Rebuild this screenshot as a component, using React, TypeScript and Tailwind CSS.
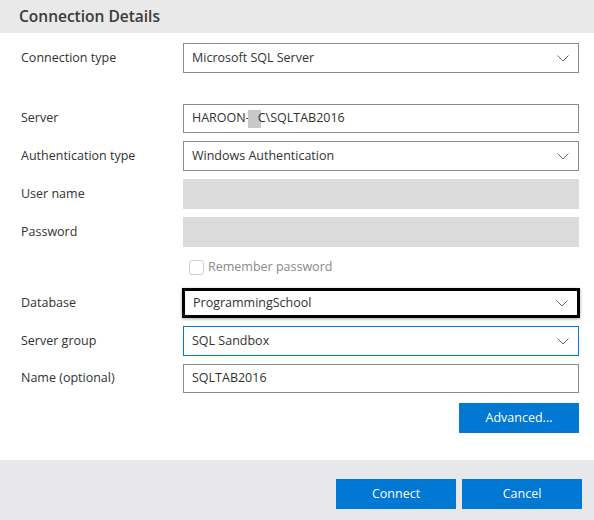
import { ReactNode } from 'react';

const font = { fontFamily: '"Open Sans", "Noto Sans", sans-serif' };

function Chevron() {
  return (
    <svg width="12" height="7" viewBox="0 0 12 7" className="shrink-0" aria-hidden>
      <path d="M0.5 0.5 L6 6 L11.5 0.5" fill="none" stroke="#6b6b6b" strokeWidth="1" />
    </svg>
  );
}

function Row({ label, children }: { label?: string; children: ReactNode }) {
  return (
    <div className="grid grid-cols-[164px_1fr] items-center">
      <div className="text-[12.5px] text-[#323232] pl-[2px]">{label}</div>
      {children}
    </div>
  );
}

function SelectBox({ value, variant = 'normal' }: { value: string; variant?: 'normal' | 'focus' | 'active' }) {
  const border =
    variant === 'focus'
      ? 'border-[3px] border-black -mx-[1px] shadow-[0_1px_3px_rgba(0,0,0,0.35)]'
      : variant === 'active'
        ? 'border border-[#0078d4]'
        : 'border border-[#8a8a8a]';
  return (
    <div className={`h-[30px] flex items-center justify-between pl-2 pr-[9px] bg-white ${border}`}>
      <span className="text-[12.5px] text-[#323232]">{value}</span>
      <Chevron />
    </div>
  );
}

function TextBox({ children }: { children?: ReactNode }) {
  return (
    <div className="h-[29px] flex items-center px-2 border border-[#8a8a8a] bg-white text-[12.5px] text-[#323232]">
      {children}
    </div>
  );
}

function BlueButton({ children }: { children: ReactNode }) {
  return (
    <button type="button" className="w-[120px] h-[30px] bg-[#0078d4] text-white text-[12.5px]">
      {children}
    </button>
  );
}

export default function App() {
  return (
    <div className="w-[594px] h-[520px] bg-white flex flex-col" style={font}>
      <div className="h-[33px] bg-[#e9e9e9] flex items-center pl-[19px] shrink-0">
        <h2 className="text-[15.5px] font-semibold text-[#3a3a3a]">Connection Details</h2>
      </div>

      <div className="flex-1 flex flex-col pt-[10px] pl-[19px] pr-[15px] gap-[8px]">
        <Row label="Connection type">
          <SelectBox value="Microsoft SQL Server" />
        </Row>
        <div className="h-[15px]" />
        <Row label="Server">
          <TextBox>
            <span>HAROON-</span>
            <span className="inline-block w-[13px] h-[18px] bg-[#c8c8c8] -ml-[2px]" />
            <span className="-ml-[3px]">C\SQLTAB2016</span>
          </TextBox>
        </Row>
        <Row label="Authentication type">
          <SelectBox value="Windows Authentication" />
        </Row>
        <Row label="User name">
          <div className="h-[30px] bg-[#dbdbdb]" />
        </Row>
        <Row label="Password">
          <div className="h-[30px] bg-[#dbdbdb]" />
        </Row>
        <Row>
          <label className="h-[25px] flex items-center gap-[4px] pl-[6px]">
            <span className="w-[15px] h-[15px] rounded-[3px] border border-[#cfcfcf] bg-white" />
            <span className="text-[12.5px] text-[#8a8a8a]">Remember password</span>
          </label>
        </Row>
        <Row label="Database">
          <SelectBox value="ProgrammingSchool" variant="focus" />
        </Row>
        <Row label="Server group">
          <SelectBox value="SQL Sandbox" variant="active" />
        </Row>
        <Row label="Name (optional)">
          <TextBox>SQLTAB2016</TextBox>
        </Row>
        <div className="flex justify-end pt-[2px]">
          <BlueButton>Advanced...</BlueButton>
        </div>
      </div>

      <div className="h-[60px] bg-[#e8e8ea] flex items-start justify-end gap-[6px] pt-[19px] pr-[12px] shrink-0">
        <BlueButton>Connect</BlueButton>
        <BlueButton>Cancel</BlueButton>
      </div>
    </div>
  );
}
